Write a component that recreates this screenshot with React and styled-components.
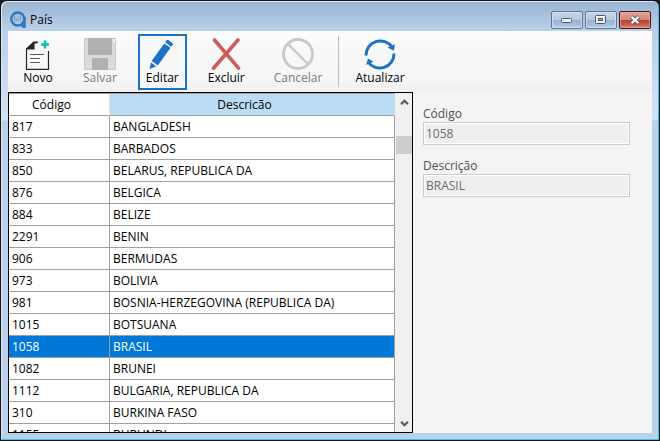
import React, { useState } from "react";
import styled, { createGlobalStyle, css } from "styled-components";

const GlobalStyle = createGlobalStyle`
  * { box-sizing: border-box; }
  html, body { margin: 0; height: 100%; background: #1c1c20; }
  body, button, input, table {
    font-family: "Open Sans", "Noto Sans", sans-serif;
    font-size: 12px;
    line-height: 16px;
  }
`;

const Window = styled.main`
  display: flex;
  flex-direction: column;
  height: 100vh;
  padding: 0 6px 7px;
  border: 1px solid #14141a;
  border-radius: 7px 7px 0 0;
  overflow: hidden;
  background: linear-gradient(#9ab3d2 0, #b9d1ea 30px, #d3e2f4 119px, #b9d1ea 120px);
  box-shadow: inset -1px -1px 0 #35c4e2, inset 1px 1px 0 #dce9f5;
`;

const TitleBar = styled.header`
  display: flex;
  align-items: center;
  flex: 0 0 30px;
  padding: 7px 2px 0 3px;
`;

const Title = styled.h1`
  flex: 1;
  margin: 0 0 0 3px;
  font-size: 12px;
  font-weight: 400;
  line-height: 16px;
  color: #000;
`;

const WindowControls = styled.div`
  display: flex;
  gap: 2px;
`;

const ControlButton = styled.button`
  display: grid;
  place-items: center;
  width: 32px;
  height: 18px;
  padding: 0;
  border: 1px solid ${(p) => (p.$danger ? "#43141e" : "#62758c")};
  border-radius: 2px;
  background: ${(p) =>
    p.$danger
      ? "linear-gradient(#e4a49a 0, #d78679 47%, #b83c27 48%, #c8604a 80%, #d99280)"
      : "linear-gradient(#c4d6e9 0, #b5cae1 47%, #98b1cd 48%, #a6c0db 80%, #bdd4eb)"};
  box-shadow: inset 0 0 0 1px ${(p) => (p.$danger ? "#e8aaa0aa" : "#d6e5f4aa")};
`;

const Client = styled.div`
  display: flex;
  flex-direction: column;
  flex: 1;
  min-height: 0;
  background: #f4f4f4;
  margin: 0 1px;
`;

const Toolbar = styled.nav`
  display: flex;
  align-items: flex-start;
  gap: 13px;
  flex: 0 0 61px;
  padding: 3px 6px 0;
  background: linear-gradient(#fdfdfd, #f7f7f7 40%, #f6f6f6 80%, #f0f0f0);
`;

const ToolButton = styled.button`
  display: flex;
  flex-direction: column;
  align-items: center;
  height: 56px;
  min-width: 46px;
  padding: 2px 6px 0;
  border: 2px solid ${(p) => (p.$active ? "#1c72c4" : "transparent")};
  background: ${(p) => (p.$active ? "#f8f8f8" : "transparent")};
  color: #000;

  &:disabled { color: #7b7b7b; }
  svg { display: block; }
`;

const ToolSeparator = styled.span`
  width: 1px;
  height: 51px;
  margin: 2px -5px 0;
  background: #bdbdbd;
`;

const Content = styled.div`
  display: grid;
  grid-template-columns: 405fr 239fr;
  flex: 1;
  min-height: 0;
`;

const GridBox = styled.section`
  display: flex;
  min-height: 0;
  border: 1px solid #000;
  background: #fff;
`;

const GridView = styled.div`
  flex: 1;
  overflow: hidden;
`;

const Table = styled.table`
  width: 100%;
  table-layout: fixed;
  border-collapse: separate;
  border-spacing: 0;
  border-top: 1px solid #a0a0a0;
`;

const cell = css`
  height: 22px;
  padding: 0 3px;
  border-right: 1px solid #a0a0a0;
  border-bottom: 1px solid #a0a0a0;
  white-space: nowrap;
`;

const HeadCell = styled.th`
  ${cell}
  width: ${(p) => (p.$narrow ? "101px" : "auto")};
  padding-right: 18px;
  border-right-color: ${(p) => (p.$sorted ? "#bbdcf2" : "#e5e5e5")};
  background: ${(p) => (p.$sorted ? "#bbdcf2" : "#fff")};
  font-weight: 400;
`;

const Row = styled.tr`
  background: ${(p) => (p.$selected ? "#0078d7" : "#fff")};
  color: ${(p) => (p.$selected ? "#fff" : "#000")};
  cursor: default;
`;

const Cell = styled.td`
  ${cell}
`;

const ScrollBar = styled.div`
  display: flex;
  flex-direction: column;
  flex: 0 0 17px;
  padding-left: 1px;
  background: #f0f0f0;
`;

const ScrollArrow = styled.button`
  display: grid;
  place-items: center;
  height: 17px;
  padding: 0;
  border: 0;
  background: transparent;
`;

const ScrollTrack = styled.div`
  flex: 1;
  padding-top: 26px;
`;

const ScrollThumb = styled.div`
  height: 18px;
  background: #cdcdcd;
`;

const Form = styled.form`
  display: flex;
  flex-direction: column;
  gap: 13px;
  padding: 14px 22px 0 10px;
`;

const Field = styled.label`
  display: block;
  color: #4f4f4f;
`;

const FieldInput = styled.input`
  display: block;
  width: 100%;
  height: 23px;
  padding: 0 2px 1px;
  border: 1px solid #cccccc;
  background: #efefef;
  box-shadow: inset 0 0 0 1px #fff;
  color: #6d6d6d;
`;

const LogoIcon = () => (
  <svg width="17" height="17" viewBox="0 0 17 17" fill="none" aria-hidden="true">
    <circle cx="7.800" cy="8" r="6.500" stroke="#2f78b8" strokeWidth="2.300" />
    <path d="M14.600 6v10.200c-1.600-.3-2.400-1.300-2.600-2.700" stroke="#2f78b8" strokeWidth="2.300" />
    <path d="M4.500 5v5M4.500 8a1.400 1.400 0 1 1 0 1.800M8.300 7.200v3.200M8.300 5v1M10.500 5.200v4.400q0 .8 1 .8M9.500 7h2" stroke="#6d9fcc" />
  </svg>
);

const MinimizeIcon = () => (
  <svg width="12" height="6" viewBox="0 0 12 6" aria-hidden="true">
    <rect x=".5" y="1.5" width="10" height="4" rx="1" fill="#f4f4f4" stroke="#4d586b" />
  </svg>
);

const MaximizeIcon = () => (
  <svg width="12" height="10" viewBox="0 0 12 10" aria-hidden="true">
    <rect x=".5" y=".5" width="10" height="8" rx="1" fill="#f4f4f4" stroke="#4d586b" />
    <rect x="3.500" y="3.500" width="4" height="2" fill="#9bb6d4" stroke="#4d586b" />
  </svg>
);

const CloseIcon = () => (
  <svg width="12" height="10" viewBox="0 0 12 10" fill="none" aria-hidden="true">
    <path d="M2.500 1.800l7 6.400M9.500 1.800l-7 6.400" stroke="#53505f" strokeWidth="4.200" />
    <path d="M2.600 1.800l6.800 6.400M9.400 1.800l-6.800 6.400" stroke="#f6f6f6" strokeWidth="2.300" />
  </svg>
);

const NewIcon = () => (
  <svg width="32" height="32" viewBox="0 0 32 32" fill="none" aria-hidden="true">
    <path d="M4.500 10.500V31.400H26.500V13" stroke="#262626" strokeWidth="1.200" />
    <path d="M4 11.500v-1L11.500 3.500h5l-1.500 2h-2.500v6z" fill="#262626" />
    <path d="M8 16.500h14M8 20.500h10M8 24.500h10" stroke="#5a5a5a" />
    <path d="M23 2.500v8M19 6.500h8" stroke="#0fc6a0" strokeWidth="2.600" />
  </svg>
);

const SaveIcon = () => (
  <svg width="32" height="32" viewBox="0 0 32 32" aria-hidden="true">
    <path d="M0 0h32v32H0z" fill="#dadada" />
    <path d="M.5.5h31v31H.5z" fill="none" stroke="#c9c9c9" />
    <path d="M4 0h24v17H4zM8 20h16v12H8z" fill="#b1b1b1" />
    <path d="M29 1h2v3h-2z" fill="#f5f5f5" />
  </svg>
);

const EditIcon = () => (
  <svg width="32" height="32" viewBox="0 0 32 32" aria-hidden="true">
    <path d="M18.300 5.400l6.200 4.400L11.800 27.400 5.600 23z" fill="#1c72c4" />
    <path d="M19.200 4.200l1.500-2q.7-.7 1.600-.1l4.300 3.100q.8.700.2 1.500l-1.500 2z" fill="#1c72c4" />
    <path d="M5 24.400l5.300 3.800-6 2.600q-.7.200-.6-.6z" fill="#1c72c4" />
  </svg>
);

const DeleteIcon = () => (
  <svg width="32" height="32" viewBox="0 0 32 32" fill="none" aria-hidden="true">
    <path d="M4.500 2l24 28.200M28 2L3.500 30.200" stroke="#cd5c5c" strokeWidth="3.600" strokeLinecap="round" />
  </svg>
);

const CancelIcon = () => (
  <svg width="32" height="32" viewBox="0 0 32 32" fill="none" stroke="#c8c8c8" aria-hidden="true">
    <circle cx="16" cy="16" r="14.500" strokeWidth="2.800" />
    <path d="M6 6l20 20" strokeWidth="2.400" />
  </svg>
);

const RefreshIcon = () => (
  <svg width="32" height="32" viewBox="0 0 32 32" fill="none" aria-hidden="true">
    <path d="M2 17.500A14.300 14.300 0 0 1 28 9M30 15.500A14.300 14.300 0 0 1 4 24" stroke="#1c72c4" strokeWidth="3" />
    <path d="M23.500 9.500l6.500 3.300L30.800 6.200zM9.500 23.800l-5.500-3.300-2 6.600z" fill="#1c72c4" />
  </svg>
);

const Chevron = ({ down }) => (
  <svg width="9" height="6" viewBox="0 0 9 6" fill="none" stroke="#555" strokeWidth="2" aria-hidden="true">
    <path d={down ? "M1 .8l3.500 3.500L8 .8" : "M1 5.200l3.500-3.500L8 5.200"} />
  </svg>
);

const countries = [
  ["817", "BANGLADESH"],
  ["833", "BARBADOS"],
  ["850", "BELARUS, REPUBLICA DA"],
  ["876", "BELGICA"],
  ["884", "BELIZE"],
  ["2291", "BENIN"],
  ["906", "BERMUDAS"],
  ["973", "BOLIVIA"],
  ["981", "BOSNIA-HERZEGOVINA (REPUBLICA DA)"],
  ["1015", "BOTSUANA"],
  ["1058", "BRASIL"],
  ["1082", "BRUNEI"],
  ["1112", "BULGARIA, REPUBLICA DA"],
  ["310", "BURKINA FASO"],
  ["1155", "BURUNDI"],
];

export default function App() {
  const [selected, setSelected] = useState("1058");
  const current = countries.find(([code]) => code === selected);

  return (
    <>
      <GlobalStyle />
      <Window>
        <TitleBar>
          <LogoIcon />
          <Title>País</Title>
          <WindowControls>
            <ControlButton aria-label="Minimizar"><MinimizeIcon /></ControlButton>
            <ControlButton aria-label="Maximizar"><MaximizeIcon /></ControlButton>
            <ControlButton aria-label="Fechar" $danger><CloseIcon /></ControlButton>
          </WindowControls>
        </TitleBar>
        <Client>
          <Toolbar>
            <ToolButton><NewIcon />Novo</ToolButton>
            <ToolButton disabled><SaveIcon />Salvar</ToolButton>
            <ToolButton $active><EditIcon />Editar</ToolButton>
            <ToolButton><DeleteIcon />Excluir</ToolButton>
            <ToolButton disabled><CancelIcon />Cancelar</ToolButton>
            <ToolSeparator />
            <ToolButton><RefreshIcon />Atualizar</ToolButton>
          </Toolbar>
          <Content>
            <GridBox>
              <GridView>
                <Table>
                  <thead>
                    <tr>
                      <HeadCell $narrow>Código</HeadCell>
                      <HeadCell $sorted>Descricão</HeadCell>
                    </tr>
                  </thead>
                  <tbody>
                    {countries.map(([code, name]) => (
                      <Row key={code} $selected={code === selected} onClick={() => setSelected(code)}>
                        <Cell>{code}</Cell>
                        <Cell>{name}</Cell>
                      </Row>
                    ))}
                  </tbody>
                </Table>
              </GridView>
              <ScrollBar>
                <ScrollArrow aria-label="Rolar para cima"><Chevron /></ScrollArrow>
                <ScrollTrack><ScrollThumb /></ScrollTrack>
                <ScrollArrow aria-label="Rolar para baixo"><Chevron down /></ScrollArrow>
              </ScrollBar>
            </GridBox>
            <Form>
              <Field>
                Código
                <FieldInput disabled value={current[0]} />
              </Field>
              <Field>
                Descrição
                <FieldInput disabled value={current[1]} />
              </Field>
            </Form>
          </Content>
        </Client>
      </Window>
    </>
  );
}
